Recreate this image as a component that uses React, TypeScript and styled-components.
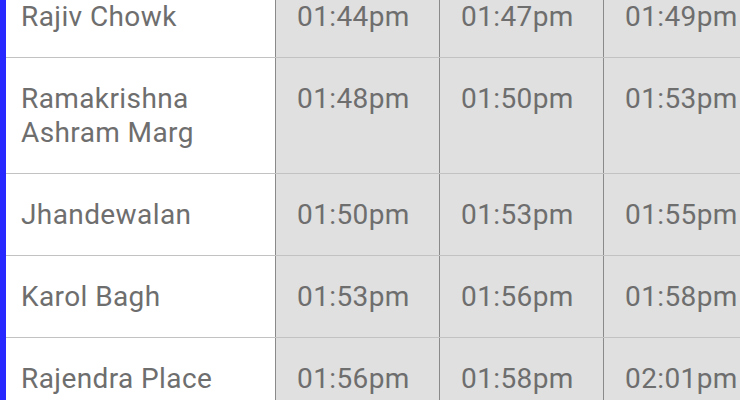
import React from "react";
import styled, { createGlobalStyle } from "styled-components";

const Global = createGlobalStyle`
  html, body { margin: 0; padding: 0; background: #ffffff; overflow: hidden; }
  body { font-family: Roboto, "Noto Sans", sans-serif; }
`;

const Page = styled.div`
  width: 740px;
  height: 400px;
  overflow: hidden;
  background: #ffffff;
`;

const Table = styled.div`
  margin-top: -24px;
  border-left: 6px solid #2727ff;
  display: flex;
  flex-direction: column;
  min-height: 430px;
`;

const Row = styled.div`
  display: grid;
  grid-template-columns: 270px 164px 164px 164px;
  border-bottom: 1px solid #c2c2c2;
`;

const Cell = styled.div<{ $time?: boolean }>`
  padding: 24px 0 23px ${(p) => (p.$time ? "21px" : "15px")};
  font-size: 28px;
  letter-spacing: 0.4px;
  line-height: 34px;
  color: #6e6e6e;
  background: ${(p) => (p.$time ? "#e0e0e0" : "#ffffff")};
  border-right: 1px solid #8a8a8a;
  white-space: ${(p) => (p.$time ? "nowrap" : "normal")};
`;

const rows: { name: string; times: string[] }[] = [
  { name: "Rajiv Chowk", times: ["01:44pm", "01:47pm", "01:49pm"] },
  { name: "Ramakrishna Ashram Marg", times: ["01:48pm", "01:50pm", "01:53pm"] },
  { name: "Jhandewalan", times: ["01:50pm", "01:53pm", "01:55pm"] },
  { name: "Karol Bagh", times: ["01:53pm", "01:56pm", "01:58pm"] },
  { name: "Rajendra Place", times: ["01:56pm", "01:58pm", "02:01pm"] },
];

export default function App() {
  return (
    <Page>
      <Global />
      <Table>
        {rows.map((r) => (
          <Row key={r.name}>
            <Cell>{r.name === "Ramakrishna Ashram Marg" ? <>Ramakrishna<br />Ashram Marg</> : r.name}</Cell>
            {r.times.map((t, i) => (
              <Cell $time key={i}>{t}</Cell>
            ))}
          </Row>
        ))}
      </Table>
    </Page>
  );
}
